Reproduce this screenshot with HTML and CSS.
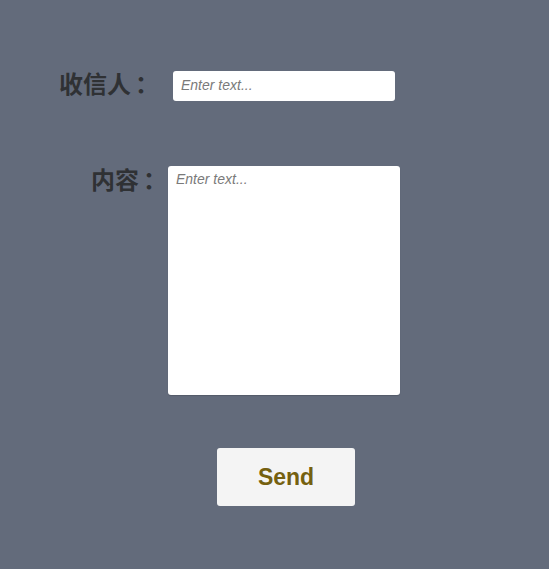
FILE: index.html
```html
<!DOCTYPE html>
<html lang="zh">
<head>
<meta charset="utf-8">
<title>Send</title>
<link rel="stylesheet" href="styles.css">
</head>
<body>
<main class="form">
  <div class="row row-to">
    <label class="label label-to" for="to">收信人<span class="colon">：</span></label>
    <input id="to" class="field" type="text" placeholder="Enter text...">
  </div>
  <div class="row row-body">
    <label class="label label-body" for="body">内容<span class="colon">：</span></label>
    <textarea id="body" class="area" placeholder="Enter text..."></textarea>
  </div>
  <div class="row row-send">
    <button class="send" type="button">Send</button>
  </div>
</main>
</body>
</html>
```

FILE: styles.css
```css
html, body {
  margin: 0;
  padding: 0;
  background: #636b7b;
  height: 100%;
}
body {
  font-family: "Liberation Sans", Arial, sans-serif;
}
.form {
  display: flex;
  flex-direction: column;
  padding-top: 71px;
}
.row {
  display: flex;
}
.row-to {
  align-items: center;
  padding-left: 59px;
}
.row-body {
  align-items: flex-start;
  margin-top: 65px;
  padding-left: 91px;
}
.row-send {
  margin-top: 53px;
  padding-left: 217px;
}
.label {
  font-family: "Noto Sans CJK SC", sans-serif;
  font-weight: 700;
  font-size: 24px;
  line-height: 30px;
  color: #2f3134;
  white-space: nowrap;
}
.colon {
  font-family: "Noto Sans CJK TC", sans-serif;
  padding-left: 4px;
}
.label-to {
  width: 114px;
  margin-top: -6px;
}
.label-body {
  width: 77px;
  margin-top: -2px;
}
.field {
  box-sizing: border-box;
  width: 222px;
  height: 30px;
  border: none;
  border-radius: 3px;
  background: #fff;
  padding: 0 8px 2px;
  font-family: "Liberation Sans", Arial, sans-serif;
  font-size: 14px;
  color: #333;
  outline: none;
}
.area {
  box-sizing: border-box;
  width: 232px;
  height: 229px;
  border: none;
  border-radius: 3px;
  background: #fff;
  padding: 5px 8px;
  font-family: "Liberation Sans", Arial, sans-serif;
  font-size: 14px;
  line-height: 16px;
  color: #333;
  resize: none;
  outline: none;
  box-shadow: 0 1px 1px rgba(0, 0, 0, 0.15);
}
.field::placeholder,
.area::placeholder {
  font-style: italic;
  color: #7a7a7a;
}
.send {
  width: 138px;
  height: 58px;
  border: none;
  border-radius: 3px;
  background: #f4f4f4;
  font-family: "Liberation Sans", Arial, sans-serif;
  font-weight: 700;
  font-size: 23px;
  color: #75600f;
  padding: 0;
  cursor: pointer;
}
```
